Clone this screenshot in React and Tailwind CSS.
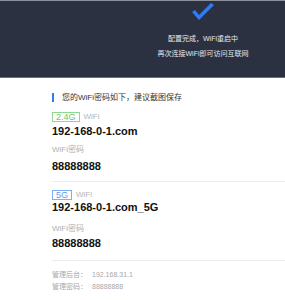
export default function App() {
  const font = { fontFamily: '"Liberation Sans", "Noto Sans CJK SC", sans-serif' }

  const Network = ({ band, badge, ssid, password, gaps }) => (
    <div>
      <div className="flex items-center h-[10px]">
        <span className={`h-[10px] px-[3px] border leading-[8px] text-[9px] ${badge}`}>{band}</span>
        <span className="ml-[4px] text-[8px] text-[#b5b5b5] leading-[10px]">WiFi</span>
      </div>
      <div className={`${gaps[0]} h-[18px] leading-[18px] text-[11px] font-bold text-[#111]`}>{ssid}</div>
      <div className={`${gaps[1]} h-[10px] leading-[10px] text-[8px] text-[#b0b0b0]`}>WiFi密码</div>
      <div className={`${gaps[2]} h-[14px] leading-[14px] text-[11px] font-bold text-[#111]`}>{password}</div>
    </div>
  )

  return (
    <div className="w-[285px] h-[300px] bg-white overflow-hidden" style={font}>
      <div className="h-[78px] bg-[#2c3141] border-t border-[#8c8f99] border-b border-b-[#6b6f7a] flex flex-col items-center pl-[121px]">
        <svg className="mt-[2px]" width="22" height="18" viewBox="0 0 22 18">
          <polygon points="0,9 3,7 7,12 19,0 22,2 7,17" fill="#2f7bf5" />
        </svg>
        <div className="mt-[13px] text-[7px] leading-[10px] text-[#e6e8ee]">配置完成，WiFi重启中</div>
        <div className="mt-[5px] text-[7px] leading-[10px] text-[#e6e8ee]">再次连接WiFi即可访问互联网</div>
      </div>

      <div className="pl-[52px]">
        <div className="mt-[15px] flex items-center h-[9px]">
          <span className="w-[2px] h-[9px] bg-[#2f7bf5]" />
          <span className="ml-[8px] text-[8px] leading-[9px] text-[#333]">您的WiFi密码如下，建议截图保存</span>
        </div>

        <div className="mt-[10px]">
          <Network
            band="2.4G"
            badge="border-[#8fd88f] text-[#6cc96c]"
            ssid="192-168-0-1.com"
            password="88888888"
            gaps={['mt-0', 'mt-[5px]', 'mt-[4px]']}
          />
        </div>

        <div className="mt-[8px] border-t border-[#ececec]" />

        <div className="mt-[8px]">
          <Network
            band="5G"
            badge="border-[#7aaef5] text-[#5b9af2]"
            ssid="192-168-0-1.com_5G"
            password="88888888"
            gaps={['-mt-[2px]', 'mt-[8px]', 'mt-[2px]']}
          />
        </div>

        <div className="mt-[10px] border-t border-[#ececec]" />

        <div className="mt-[8px] text-[7px] leading-[12px] text-[#a8a8a8]">
          <div className="flex"><span className="w-[40px]">管理后台：</span><span>192.168.31.1</span></div>
          <div className="flex"><span className="w-[40px]">管理密码：</span><span>88888888</span></div>
        </div>
      </div>
    </div>
  )
}
